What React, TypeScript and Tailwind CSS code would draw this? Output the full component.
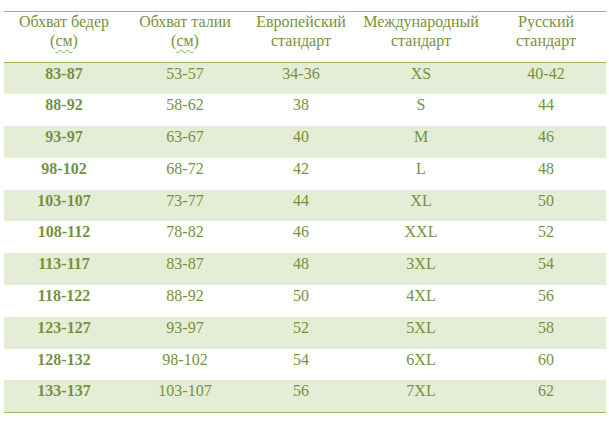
const rows: [string, string, string, string, string][] = [
  ['83-87', '53-57', '34-36', 'XS', '40-42'],
  ['88-92', '58-62', '38', 'S', '44'],
  ['93-97', '63-67', '40', 'M', '46'],
  ['98-102', '68-72', '42', 'L', '48'],
  ['103-107', '73-77', '44', 'XL', '50'],
  ['108-112', '78-82', '46', 'XXL', '52'],
  ['113-117', '83-87', '48', '3XL', '54'],
  ['118-122', '88-92', '50', '4XL', '56'],
  ['123-127', '93-97', '52', '5XL', '58'],
  ['128-132', '98-102', '54', '6XL', '60'],
  ['133-137', '103-107', '56', '7XL', '62'],
];

function Cm() {
  return (
    <>
      (
      <span className="underline decoration-wavy decoration-[#6fb24a] decoration-1 underline-offset-[3px]">
        см
      </span>
      )
    </>
  );
}

export default function App() {
  return (
    <div className="min-h-screen bg-white pt-[11px] pl-[4px] font-['Liberation_Serif',serif] text-[16px] text-[#76923C]">
      <table className="table-fixed border-collapse w-[602px]">
        <colgroup>
          <col className="w-[120px]" />
          <col className="w-[122px]" />
          <col className="w-[110px]" />
          <col className="w-[130px]" />
          <col className="w-[120px]" />
        </colgroup>
        <thead>
          <tr className="border-t border-b border-[#9BBB59] align-top leading-[19px]">
            <th className="font-normal pt-0 pb-[12px] text-center">
              Обхват бедер
              <br />
              <Cm />
            </th>
            <th className="font-normal pt-0 pb-[12px] text-center">
              Обхват талии
              <br />
              <Cm />
            </th>
            <th className="font-normal pt-0 pb-[12px] text-center">
              Европейский
              <br />
              стандарт
            </th>
            <th className="font-normal pt-0 pb-[12px] text-center">
              Международный
              <br />
              стандарт
            </th>
            <th className="font-normal pt-0 pb-[12px] text-center">
              Русский
              <br />
              стандарт
            </th>
          </tr>
        </thead>
        <tbody className="border-b border-[#9BBB59]">
          {rows.map((r, i) => (
            <tr
              key={r[0]}
              className={`h-[31.8px] align-top leading-[18px] ${i % 2 === 0 ? 'bg-[#E5EDD6]' : 'bg-white'}`}
            >
              <td className="pt-[2px] text-center font-bold">{r[0]}</td>
              <td className="pt-[2px] text-center">{r[1]}</td>
              <td className="pt-[2px] text-center">{r[2]}</td>
              <td className="pt-[2px] text-center">{r[3]}</td>
              <td className="pt-[2px] text-center">{r[4]}</td>
            </tr>
          ))}
        </tbody>
      </table>
    </div>
  );
}
